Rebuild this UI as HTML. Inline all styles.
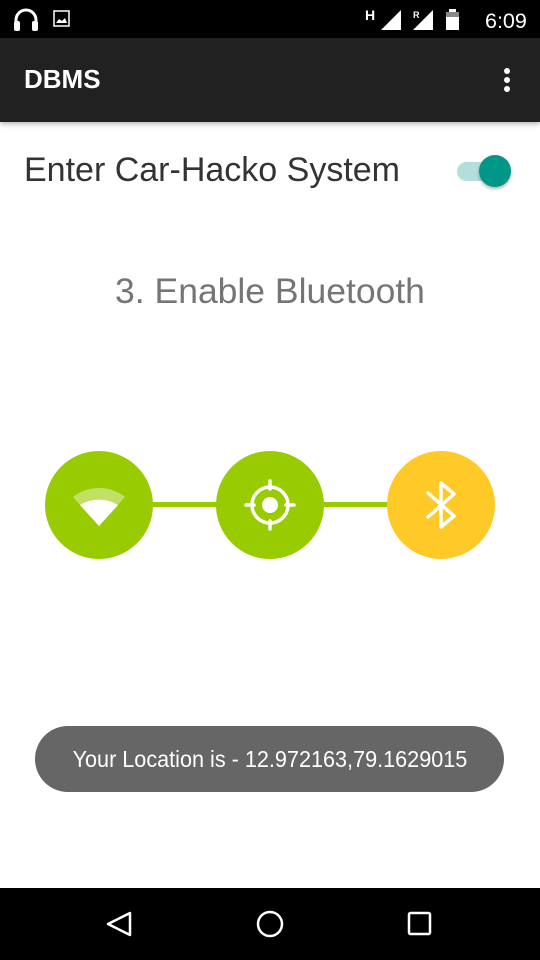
<!DOCTYPE html>
<html><head><meta charset="utf-8"><style>
*{margin:0;padding:0;box-sizing:border-box}
body{width:540px;height:960px;position:relative;background:#fff;font-family:"Liberation Sans",sans-serif;overflow:hidden}
.abs{position:absolute}
</style></head><body>
<div class="abs" style="left:0;top:0;width:540px;height:38px;background:#000"></div>
<svg class="abs" style="left:0;top:0" width="540" height="38">
<path d="M16 28 V20 A10 10 0 0 1 36 20 V28" fill="none" stroke="#fff" stroke-width="3"/>
<rect x="14" y="21" width="6" height="10" rx="2" fill="#fff"/><rect x="32" y="21" width="6" height="10" rx="2" fill="#fff"/>
<rect x="54" y="11" width="15" height="15" fill="none" stroke="#fff" stroke-width="1.5"/>
<path d="M56 23 L59 19 L62 21 L65 18 L67 23Z" fill="#fff"/>
<text x="365" y="20" fill="#fff" font-size="14" font-weight="bold" font-family="Liberation Sans">H</text>
<path d="M381 30 L401 10 V30Z" fill="#fff"/>
<text x="413" y="18" fill="#fff" font-size="9" font-weight="bold">R</text>
<path d="M413 30 L433 10 V30Z" fill="#fff"/>
<rect x="446" y="12" width="13" height="18" fill="#fff"/><rect x="449" y="9" width="7" height="3" fill="#fff"/>
<rect x="446" y="12" width="13" height="5" fill="#888"/>
<text x="485" y="28" fill="#fff" font-size="21.5">6:09</text>
</svg>
<div class="abs" style="left:0;top:38px;width:540px;height:84px;background:#212121;box-shadow:0 2px 5px rgba(0,0,0,.3)"></div>
<div class="abs" style="left:24px;top:64px;color:#fff;font-size:26px;font-weight:bold;">DBMS</div>
<svg class="abs" style="left:500px;top:66px" width="14" height="30"><circle cx="7" cy="5" r="3" fill="#fff"/><circle cx="7" cy="14" r="3" fill="#fff"/><circle cx="7" cy="23" r="3" fill="#fff"/></svg>
<div class="abs" style="left:24px;top:151px;color:#333;font-size:34px;">Enter Car-Hacko System</div>
<div class="abs" style="left:457px;top:162px;width:50px;height:19px;border-radius:10px;background:#b2dfdb"></div>
<div class="abs" style="left:479px;top:155px;width:32px;height:32px;border-radius:50%;background:#009688;box-shadow:0 2px 3px rgba(0,0,0,.3)"></div>
<div class="abs" style="left:0;top:271px;width:540px;text-align:center;color:#757575;font-size:35.5px;">3. Enable Bluetooth</div>
<svg class="abs" style="left:0;top:440px" width="540" height="130">
<rect x="150" y="62" width="240" height="5" fill="#99cc00"/>
<circle cx="99" cy="65" r="54" fill="#99cc00"/>
<circle cx="270" cy="65" r="54" fill="#99cc00"/>
<circle cx="441" cy="65" r="54" fill="#ffca28"/>
<path d="M73 57 A42 42 0 0 1 125 57 L99 86Z" fill="#c2e066"/>
<path d="M80 65 A36 36 0 0 1 118 65 L99 86Z" fill="#fff"/>
<circle cx="270" cy="65" r="18" fill="none" stroke="#fff" stroke-width="3.5"/>
<circle cx="270" cy="65" r="8" fill="#fff"/>
<path d="M270 41 V49 M270 81 V89 M246 65 H254 M286 65 H294" stroke="#fff" stroke-width="3.5" stroke-linecap="round"/>
<path d="M428 53 L454 76 L441 87 V43 L454 54 L428 77" fill="none" stroke="#fff" stroke-width="3.5" stroke-linecap="round" stroke-linejoin="round"/>
</svg>
<div class="abs" style="left:35px;top:726px;width:469px;height:66px;border-radius:33px;background:#666;color:#fff;font-size:23px;text-align:center;line-height:66px;"><span style="display:inline-block;transform:scaleX(.94);white-space:nowrap;font-family:'Liberation Sans Narrow','Liberation Sans',sans-serif;">Your Location is - 12.972163,79.1629015</span></div>
<div class="abs" style="left:0;top:888px;width:540px;height:72px;background:#000"></div>
<svg class="abs" style="left:0;top:888px" width="540" height="72">
<path d="M130 25 L108 36 L130 47Z" fill="none" stroke="#fff" stroke-width="2.5" stroke-linejoin="round"/>
<circle cx="270" cy="36" r="12" fill="none" stroke="#fff" stroke-width="2.5"/>
<rect x="409" y="25" width="21" height="21" rx="1.5" fill="none" stroke="#fff" stroke-width="2.5"/>
</svg>
</body></html>
